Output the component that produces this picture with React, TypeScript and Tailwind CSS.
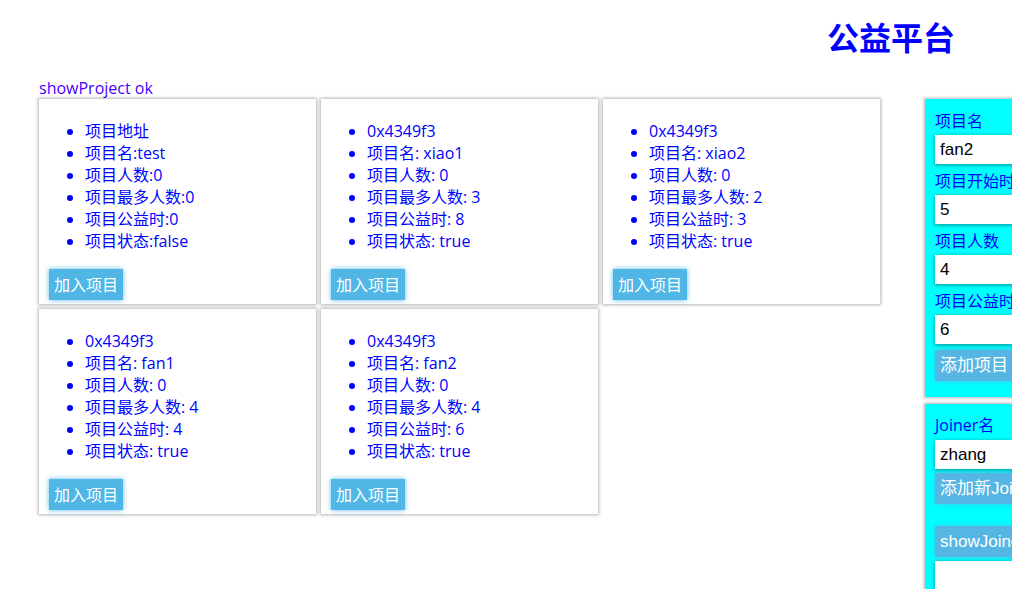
import React from "react";

const cards = [
  { addr: "项目地址", name: "项目名:test", num: "项目人数:0", max: "项目最多人数:0", hours: "项目公益时:0", status: "项目状态:false" },
  { addr: "0x4349f3", name: "项目名: xiao1", num: "项目人数: 0", max: "项目最多人数: 3", hours: "项目公益时: 8", status: "项目状态: true" },
  { addr: "0x4349f3", name: "项目名: xiao2", num: "项目人数: 0", max: "项目最多人数: 2", hours: "项目公益时: 3", status: "项目状态: true" },
  { addr: "0x4349f3", name: "项目名: fan1", num: "项目人数: 0", max: "项目最多人数: 4", hours: "项目公益时: 4", status: "项目状态: true" },
  { addr: "0x4349f3", name: "项目名: fan2", num: "项目人数: 0", max: "项目最多人数: 4", hours: "项目公益时: 6", status: "项目状态: true" },
];

function Card({ c }: { c: (typeof cards)[number] }) {
  return (
    <div className="w-[277px] h-[205px] bg-white shadow-[0_0_3px_1px_rgba(0,0,0,0.3)] pt-[7px] pl-[10px] pb-[3px]">
      <ul className="list-disc pl-[36px] mt-[14px] mb-[17px] text-[16px] leading-[22px] text-[#0000ff] marker:text-[#0000ff]">
        <li>{c.addr}</li>
        <li>{c.name}</li>
        <li>{c.num}</li>
        <li>{c.max}</li>
        <li>{c.hours}</li>
        <li>{c.status}</li>
      </ul>
      <button className="h-[31px] px-[5px] bg-[#4fb6e6] text-white text-[16px] leading-[22px] shadow-[0_0_5px_rgba(79,182,230,0.9)]">
        加入项目
      </button>
    </div>
  );
}

function Field({ label, value }: { label: string; value: string }) {
  return (
    <>
      <div className="h-[22px] leading-[22px] text-[16px] text-[#0000ff] mb-[3px]">{label}</div>
      <div className="h-[29px] w-[200px] bg-white shadow-[0_1px_4px_rgba(0,0,0,0.45)] mb-[6px] pl-[5px] flex items-center text-[17px] text-black font-['Liberation_Sans','Noto_Sans_CJK_SC',sans-serif]">
        {value}
      </div>
    </>
  );
}

const panelBtn =
  "h-[31px] px-[5px] bg-[#55b5e3] text-white text-[17px] whitespace-nowrap shadow-[0_0_5px_rgba(85,181,227,0.8)] font-['Liberation_Sans','Noto_Sans_CJK_SC',sans-serif]";

export default function App() {
  return (
    <div className="w-[1012px] h-[589px] overflow-hidden bg-white font-['Open_Sans','Noto_Sans_CJK_SC',sans-serif]">
      <div className="flex justify-end pr-[57px] pt-[16px]">
        <h1 className="text-[32px] leading-[40px] font-bold text-[#0000ff] font-['Noto_Sans_CJK_SC',sans-serif]">
          公益平台
        </h1>
      </div>
      <div className="flex pl-[39px] mt-[22px]">
        <div className="w-[841px] shrink-0">
          <div className="text-[16px] leading-[22px] text-[#4400ff] -mt-[1px]">showProject ok</div>
          <div className="grid grid-cols-[277px_277px_277px] gap-[5px]">
            {cards.map((c, i) => (
              <Card key={i} c={c} />
            ))}
          </div>
        </div>
        <div className="ml-[45px] shrink-0 flex flex-col gap-[7px] pt-[21px]">
          <div className="w-[200px] bg-[#00ffff] shadow-[0_0_3px_1px_rgba(0,0,0,0.3)] pt-[11px] pl-[10px] pb-[16px]">
            <Field label="项目名" value="fan2" />
            <Field label="项目开始时间" value="5" />
            <Field label="项目人数" value="4" />
            <Field label="项目公益时间" value="6" />
            <div>
              <button className={panelBtn}>添加项目</button>
            </div>
          </div>
          <div className="w-[200px] h-[300px] bg-[#00ffff] shadow-[0_0_3px_1px_rgba(0,0,0,0.3)] pt-[10px] pl-[10px]">
            <div className="h-[22px] leading-[22px] text-[16px] text-[#0000ff] mb-[4px]">Joiner名</div>
            <div className="h-[29px] w-[200px] bg-white shadow-[0_1px_4px_rgba(0,0,0,0.45)] mb-[4px] pl-[5px] flex items-center text-[17px] text-black font-['Liberation_Sans',sans-serif]">
              zhang
            </div>
            <button className={panelBtn + " h-[29px]"}>添加新Joiner</button>
            <div className="mt-[22px]">
              <button className={panelBtn + " h-[28px]"}>showJoiner</button>
            </div>
            <div className="mt-[4px] h-[30px] w-[200px] bg-white shadow-[0_1px_4px_rgba(0,0,0,0.45)]"></div>
          </div>
        </div>
      </div>
    </div>
  );
}
